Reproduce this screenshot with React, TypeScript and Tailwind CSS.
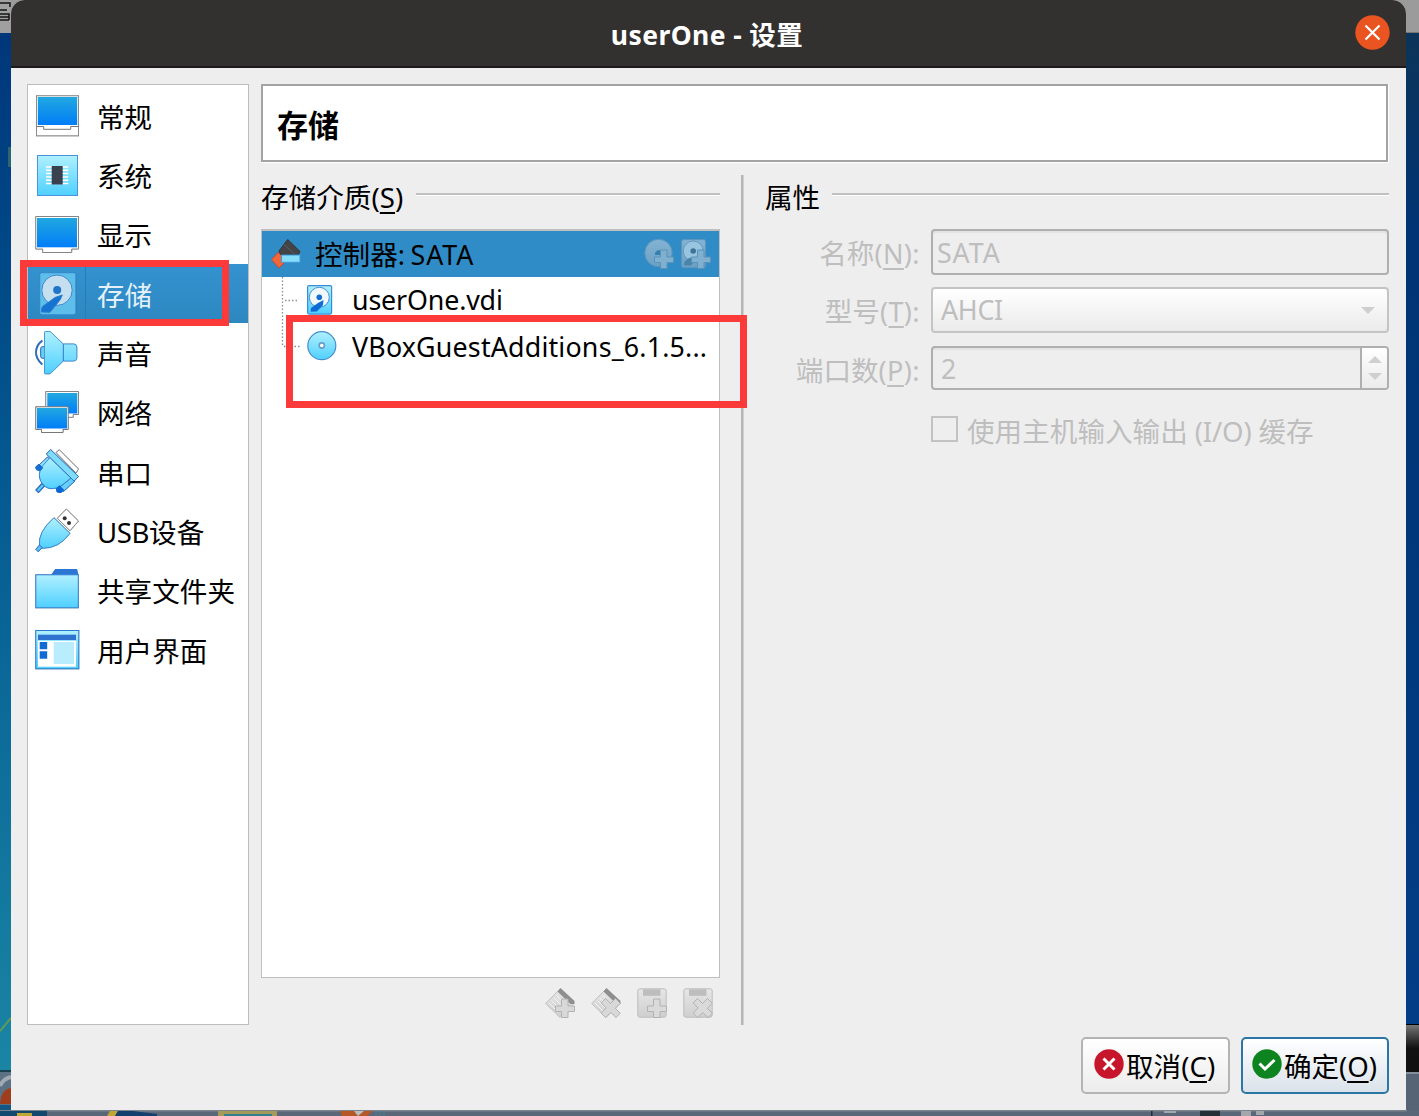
import React, { type ReactNode } from "react";

const INK = "#2b6fc4";

function Defs() {
  return (
    <svg width="0" height="0" className="absolute">
      <defs>
        <linearGradient id="screen" x1="0" y1="0" x2="0" y2="1">
          <stop offset="0" stopColor="#21a8e0" />
          <stop offset="1" stopColor="#007df8" />
        </linearGradient>
        <linearGradient id="ice" x1="0" y1="0" x2="0" y2="1">
          <stop offset="0" stopColor="#b0f0ff" />
          <stop offset="1" stopColor="#4fd0ff" />
        </linearGradient>
        <linearGradient id="grey" x1="0" y1="0" x2="0" y2="1">
          <stop offset="0" stopColor="#e6e6e6" />
          <stop offset="1" stopColor="#cfcfcf" />
        </linearGradient>
        <linearGradient id="steel" x1="0" y1="0" x2="0" y2="1">
          <stop offset="0" stopColor="#84b3d4" />
          <stop offset="1" stopColor="#6ba0c4" />
        </linearGradient>
      </defs>
    </svg>
  );
}

function Icon({ children }: { children: ReactNode }) {
  return (
    <svg width="45" height="46" viewBox="0 0 45 46" className="shrink-0 overflow-visible drop-shadow-[0.5px_0.8px_0.5px_rgba(0,0,0,0.35)]">
      {children}
    </svg>
  );
}

const GeneralIcon = () => (
  <Icon>
    <rect x="1.5" y="2.8" width="42" height="40" fill="#fff" stroke="#8b8b8b" />
    <rect x="2.8" y="4" width="39.4" height="28" fill="url(#screen)" />
    <path d="M1.5 33.5H8.7V36.3H35.7V33.5H43.5" fill="none" stroke="#777" />
  </Icon>
);

const SystemIcon = () => (
  <Icon>
    <rect x="2.5" y="3.5" width="40" height="40" fill="url(#ice)" stroke="#4a94de" />
    <path d="M11 15h22.3M11 18.3h22.3M11 21.6h22.3M11 24.9h22.3M11 28.2h22.3M11 31.5h22.3" stroke="#fff" strokeWidth="1.5" />
    <rect x="16.7" y="14" width="11" height="18.5" fill="#39414e" />
  </Icon>
);

const DisplayIcon = () => (
  <Icon>
    <path d="M.8 5.5h42.7v32.5h-6.8v3.5h-29v-3.5h-6.9z" fill="#fff" stroke="#858585" />
    <rect x="2" y="7" width="40" height="29.3" fill="url(#screen)" />
  </Icon>
);

const StorageIcon = () => (
  <Icon>
    <rect x="4.8" y="1.8" width="36" height="41.7" rx="2" fill="#5dbfe9" stroke="#3b91dc" />
    <circle cx="22" cy="19.2" r="15.2" fill="#c5def0" stroke="#3f89cf" />
    <circle cx="22.2" cy="19" r="4" fill="#1e75cc" />
    <path d="M27.300 24l-7.300 2.500-12.500 9q-1 1-1.200 5.500l8.700.3 10-12.300z" fill="#1674d0" stroke="#2a80cf" />
  </Icon>
);

const AudioIcon = () => (
  <Icon>
    <rect x="5.7" y="16.7" width="6" height="11.5" rx="2" fill="#68cff7" stroke={INK} />
    <path d="M10.500 1.500h3.500q1.500 0 2.500 1.200L28.300 14h10.500q3 0 3 3v11q0 3-3 3H28.300L16.500 42.500q-1 1.300-2.500 1.300h-3.500q-1 0-1-1V2.500q0-1 1-1z" fill="url(#ice)" stroke="#4797dd" />
    <path d="M28.300 14v17" stroke="#2d77cb" />
    <path d="M7.300 10.500Q1 15.500 1 22.300T7.300 34.500" fill="none" stroke={INK} strokeWidth="1.8" />
  </Icon>
);

const NetworkIcon = () => (
  <Icon>
    <path d="M10.800 2.500h32.700V25.500h-5.300v2.800h-16v-2.800H10.800z" fill="#fff" stroke="#858585" />
    <rect x="12.3" y="4" width="30" height="20.5" fill="url(#screen)" />
    <path d="M.8 17.800h32.400v22.700h-5.200v3H6.500v-3H.8z" fill="#fff" stroke="#777" />
    <rect x="2" y="19" width="30" height="20.5" fill="url(#screen)" />
  </Icon>
);

const SerialIcon = () => (
  <Icon>
    <path d="M24.300.7L43.500 20l-2.500 4L21 3.500z" fill="#fff" stroke="#858585" />
    <path d="M7 34.500L1 41l2.500 2.500L9.500 37z" fill="#5fcbfa" stroke={INK} strokeWidth="1.2" />
    <path d="M12.500 8L3.500 16.500l4 4L16 12z" fill="#91e2fd" stroke={INK} />
    <path d="M36 29L25 38l3.500 4.500L40 32z" fill="#65cffa" stroke={INK} />
    <path d="M15 8.500L6.500 18Q2.500 26 6 32.500T16 39.700Q22 40 26.500 36.500L36 29z" fill="url(#ice)" stroke="#3583d2" />
    <path d="M15.700.6L43.500 27.500l-4.400 4.600L11.300 5z" fill="#80dcfb" stroke={INK} />
    <path d="M4 15l3.700 3.800-2.500 3-3.500-1-1.200-2.600z" fill="#176ed1" stroke="#176ed1" strokeLinejoin="round" />
    <path d="M24.500 36.800l4.200 4.200-2.600 2.600-4-.6-.8-3.600z" fill="#0867d8" stroke="#0867d8" strokeLinejoin="round" />
  </Icon>
);

const UsbIcon = () => (
  <Icon>
    <path d="M31.300 1L43.500 13 35 22.700 22.300 10.300z" fill="#fff" stroke="#858585" />
    <circle cx="29.7" cy="10.3" r="2" fill="#333" />
    <circle cx="34" cy="15" r="2" fill="#333" />
    <path d="M19 9.700L35 25.300Q24 40.500 7.500 40.300L4.500 38Q2.500 24 19 9.700z" fill="url(#ice)" stroke="#3b88d4" />
    <path d="M4.500 37l2.600 2.500-3.800 4.300-2.500-2.500z" fill="#57c3f5" stroke={INK} />
  </Icon>
);

const FolderIcon = () => (
  <Icon>
    <path d="M16 8l4.300-6H42l1.500 6z" fill="#2b76d4" />
    <rect x=".8" y="7.8" width="42.5" height="33" fill="url(#ice)" stroke="#367fd0" />
  </Icon>
);

const InterfaceIcon = () => (
  <Icon>
    <rect x=".8" y="3.5" width="43" height="38.3" fill="url(#ice)" stroke="#287bcf" />
    <rect x="3" y="7.7" width="38" height="5.3" fill="#2c72ce" />
    <rect x="3" y="14" width="38" height="25.7" fill="#fff" />
    <path d="M4.700 15h7.500v7.300H4.700zM4.700 24.200h7.500v7.500H4.700z" fill="#0f6cd5" />
    <rect x="18.7" y="15" width="20.3" height="22" fill="#b9edfe" />
  </Icon>
);

const SECTIONS = [
  { label: "常规", icon: <GeneralIcon /> },
  { label: "系统", icon: <SystemIcon /> },
  { label: "显示", icon: <DisplayIcon /> },
  { label: "存储", icon: <StorageIcon />, active: true },
  { label: "声音", icon: <AudioIcon /> },
  { label: "网络", icon: <NetworkIcon /> },
  { label: "串口", icon: <SerialIcon /> },
  { label: "USB设备", icon: <UsbIcon /> },
  { label: "共享文件夹", icon: <FolderIcon /> },
  { label: "用户界面", icon: <InterfaceIcon /> },
];

function Sidebar() {
  return (
    <nav className="h-[941px] w-[222px] shrink-0 border border-[#bdbdbd] bg-white pt-px">
      {SECTIONS.map((s) => (
        <div
          key={s.label}
          className={
            s.active
              ? "flex h-[59.33px] bg-linear-to-b from-[#3492d0] to-[#2d88c0] pt-[6.6px] pl-[7px] text-[#e4f1fa]"
              : "flex h-[59.33px] pt-[6.6px] pl-[7px]"
          }
        >
          {s.icon}
          {s.active ? <span className="-mt-[6.6px] ml-[5px] h-[59px] w-px bg-[#2a7cb0]" /> : <span className="ml-[5px] w-px" />}
          <span className="ml-[11px] leading-[49.6px] whitespace-nowrap">
            {s.label.startsWith("USB") ? (
              <>
                <span className="tracking-[-0.4px]">USB</span>
                {s.label.slice(3)}
              </>
            ) : (
              s.label
            )}
          </span>
        </div>
      ))}
    </nav>
  );
}

function Rule() {
  return <span className="mt-[18px] h-[3px] grow border-t-2 border-b border-t-[#c0c0c0] border-b-white" />;
}

const Key = ({ children }: { children: string }) => (
  <span className="underline decoration-[1.5px] underline-offset-[4px]">{children}</span>
);

function TreeIconController() {
  return (
    <svg width="30" height="30" viewBox="0 0 30 30">
      <path d="M6.500 14L.5 20.500 8 29l6-6V14z" fill="#f2663a" stroke="#c84b2b" />
      <path d="M16.700.5L29 12.500l-1.500 3H9.500L8 12z" fill="#424446" stroke="#333" />
      <path d="M12.500 5l11 10" stroke="#606366" strokeWidth=".8" />
      <rect x="10.5" y="16" width="18.5" height="7.3" fill="#83ddfb" stroke="#3d97d9" />
    </svg>
  );
}

function TreeIconDisk() {
  return (
    <svg width="30" height="30" viewBox="0 0 30 30">
      <rect x=".6" y=".6" width="24" height="28.5" rx="1.5" fill="url(#ice)" stroke="#388bd5" strokeWidth="1.2" />
      <circle cx="12.3" cy="12.3" r="10" fill="#f1f9fe" stroke="#4590d1" />
      <circle cx="12.3" cy="12.3" r="2.8" fill="#146dd0" />
      <path d="M16.500 15l-5.500 3-7 5-.5 3.700 6.500-.2 6-6.500z" fill="#0e6cd4" />
    </svg>
  );
}

function TreeIconDisc() {
  return (
    <svg width="30" height="30" viewBox="0 0 30 30">
      <circle cx="14.8" cy="14.7" r="14" fill="url(#ice)" stroke="#458fcc" strokeWidth="1.2" />
      <circle cx="14.8" cy="14.5" r="2.6" fill="#fff" stroke="#6a9cc4" strokeWidth="1.6" />
    </svg>
  );
}

const PLUS = "M16.5 11h6.500v7h6.500v5.500h-6.500v6h-6.500v-6h-6v-5.500h6z";
const CROSS = "M14.500 10.500l5 5 5-5 4.800 4.800-5 5 5 5-4.300 4.200-5.300-5-5 5-4.500-4.500 5-5-5-5z";

function AddOptical() {
  return (
    <svg width="30" height="30" viewBox="0 0 30 30">
      <circle cx="14.5" cy="14" r="13.7" fill="url(#steel)" stroke="#5f94b9" />
      <path d="M11 16v-2q1-3 5.500-3v5z" fill="#3580b0" />
      <path d={PLUS} fill="#7fb0d0" stroke="#5d92b8" />
    </svg>
  );
}

function AddDisk() {
  return (
    <svg width="30" height="30" viewBox="0 0 30 30">
      <rect x=".6" y=".6" width="24" height="28" rx="2" fill="url(#steel)" stroke="#5f94b9" />
      <circle cx="12.2" cy="12" r="10" fill="#98c4e0" stroke="#6699bc" />
      <circle cx="12.2" cy="12" r="2.8" fill="#3d7498" />
      <path d="M13 18l-5 1-4.500 3.700-.5 3.500 7 .300 4-5z" fill="#4883a8" />
      <path d={PLUS} fill="#80b0d0" stroke="#5d92b8" />
    </svg>
  );
}

function ControllerTool({ shape }: { shape: string }) {
  return (
    <svg width="30" height="30" viewBox="0 0 30 30">
      <path d="M15 1L.7 15.500 15 29.500l14-14z" fill="url(#grey)" stroke="#c0c0c0" />
      <path d="M4 15l8 8M6.500 12.500l8 8M9 10l8 8M11.500 7.500l8 8" stroke="#f2f2f2" strokeWidth="1" />
      <path d="M15.500 0l14 13v3h-4L12.500 3.500z" fill="#8e8e8e" />
      <path d={shape} fill="#d8d8d8" stroke="#b2b2b2" />
    </svg>
  );
}

function AttachmentTool({ shape }: { shape: string }) {
  return (
    <svg width="30" height="30" viewBox="0 0 30 30">
      <rect x=".8" y=".8" width="28.4" height="28.4" rx="2" fill="url(#grey)" stroke="#bdbdbd" />
      <rect x="6" y="1.3" width="17.5" height="6.5" fill="#bdbdbd" />
      <path d={shape} fill="#dadada" stroke="#b2b2b2" />
    </svg>
  );
}

function StorageTree() {
  return (
    <section className="w-[459px] shrink-0">
      <div className="flex h-[54px]">
        <h2 className="mr-[13px] -mt-px leading-[46px] whitespace-nowrap">
          存储介质<span className="tracking-[0.1px]">(<Key>S</Key>)</span>
        </h2>
        <Rule />
      </div>
      <div className="relative h-[749px] border border-t-2 border-[#bfbfbf] bg-white">
        <div className="flex h-[46px] items-center bg-[#308cc6] pr-[8px] pl-[9px]">
          <TreeIconController />
          <span className="ml-[14px] grow leading-[44px]">
            控制器<span className="text-[26.8px] tracking-[-0.72px]">: </span>
            <span className="text-[26.8px] tracking-[0.9px]">SATA</span>
          </span>
          <AddOptical />
          <span className="w-[7px]" />
          <AddDisk />
        </div>
        <div className="flex h-[46px] items-center pl-[45px] text-[26.8px]">
          <TreeIconDisk />
          <span className="ml-[15px] leading-[46px] tracking-[-0.15px]">userOne.vdi</span>
        </div>
        <div className="flex h-[46px] items-center pl-[45px] text-[26.8px]">
          <TreeIconDisc />
          <span className="mt-[2px] ml-[15px] leading-[46px] tracking-[0.19px] whitespace-nowrap">VBoxGuestAdditions_6.1.5...</span>
        </div>
        <svg width="24" height="74" className="absolute top-[46px] left-[19px]">
          <path d="M1.500 0V70M4 23.500h13M3 69.500h16" fill="none" stroke="#8c8c8c" strokeDasharray="1.500 2" strokeWidth="1.3" />
        </svg>
        <div className="absolute top-[84px] left-[24px] h-[93px] w-[461px] border-[7px] border-[#fc3a39]" />
      </div>
      <div className="flex justify-end gap-[16px] pt-[10px] pr-[7px]">
        <ControllerTool shape={PLUS} />
        <ControllerTool shape={CROSS} />
        <AttachmentTool shape={PLUS} />
        <AttachmentTool shape={CROSS} />
      </div>
    </section>
  );
}

function Row({ label, mnemonic, height, children }: { label: string; mnemonic: string; height: string; children: ReactNode }) {
  return (
    <div className={height}>
      <label className="w-[155px] text-right leading-[48px] whitespace-nowrap">
        {label}
        <span className="text-[27px] tracking-[0.4px]">
          (<Key>{mnemonic}</Key>):
        </span>
      </label>
      <div className="ml-[11px] flex grow">{children}</div>
    </div>
  );
}

function Attributes() {
  return (
    <section className="ml-[21px] w-[624px]">
      <div className="flex h-[54px]">
        <h2 className="mr-[12px] -mt-px leading-[46px]">属性</h2>
        <Rule />
      </div>
      <div className="text-[#bebebe]">
        <Row label="名称" mnemonic="N" height="flex h-[58px]">
          <div className="h-[46px] grow rounded-[4px] border-2 border-[#afafaf] pl-[4px] text-[26.8px] leading-[43px] tracking-[0.9px] shadow-[inset_0_2px_1px_#e2e2e2]">SATA</div>
        </Row>
        <Row label="型号" mnemonic="T" height="flex h-[59px]">
          <div className="flex h-[46px] grow items-center justify-between rounded-[4px] border-2 border-[#c4c4c4] bg-linear-to-b from-white to-[#ebebeb] pr-[12px] pl-[8px] text-[26.8px] tracking-[-0.3px]">
            <span className="-mt-px leading-[42px]">AHCI</span>
            <svg width="14" height="7"><path d="M0 0h14L7 7z" fill="#cfcfcf" /></svg>
          </div>
        </Row>
        <Row label="端口数" mnemonic="P" height="flex h-[71px]">
          <div className="flex h-[44px] grow overflow-hidden rounded-[4px] border-2 border-[#afafaf] pl-[8px] text-[26.8px] shadow-[inset_0_2px_1px_#e2e2e2]">
            <span className="grow leading-[42px]">2</span>
            <span className="flex w-[27px] flex-col items-center gap-[10px] border-l-2 border-[#afafaf] bg-linear-to-b from-white to-[#ebebeb] pt-[8px]">
              <svg width="14" height="7"><path d="M0 7h14L7 0z" fill="#cfcfcf" /></svg>
              <svg width="14" height="7"><path d="M0 0h14L7 7z" fill="#cfcfcf" /></svg>
            </span>
          </div>
        </Row>
        <div className="flex pl-[166px]">
          <span className="-mt-px h-[26px] w-[27px] border-2 border-[#c2c2c2]" />
          <span className="-mt-[9px] ml-[9px] leading-[46px] whitespace-nowrap">
            使用主机输入输出<span className="tracking-[-0.2px]"> (I/O) </span>缓存
          </span>
        </div>
      </div>
    </section>
  );
}

function Footer() {
  return (
    <div className="flex justify-end gap-[11px] pt-[12px] pr-[17px]">
      <button className="flex h-[57px] w-[149px] items-center rounded-[5px] border-2 border-[#b4b4b4] bg-linear-to-b from-white to-[#ececec] pl-[11px]">
        <svg width="30" height="30" viewBox="0 0 30 30" className="-mt-[3px] shrink-0">
          <circle cx="15" cy="15" r="14.7" fill="#c7162b" />
          <path d="M9.500 9.500l11 11M20.500 9.500l-11 11" stroke="#fff" strokeWidth="3" />
        </svg>
        <span className="ml-[2px] leading-[54px] whitespace-nowrap">取消(<Key>C</Key>)</span>
      </button>
      <button className="flex h-[57px] w-[148px] items-center rounded-[5px] border-2 border-[#2b76a4] bg-linear-to-b from-white to-[#dae2ea] pl-[9px]">
        <svg width="30" height="30" viewBox="0 0 30 30" className="-mt-[3px] shrink-0">
          <circle cx="15" cy="15" r="14.7" fill="#0e8420" />
          <path d="M7.500 14.500l5.500 5.500 9.500-9" fill="none" stroke="#fff" strokeWidth="3" />
        </svg>
        <span className="ml-[2px] leading-[54px] tracking-[-0.1px] whitespace-nowrap">确定(<Key>O</Key>)</span>
      </button>
    </div>
  );
}

function LeftBackdrop() {
  return (
    <div className="h-[1110px] overflow-hidden bg-linear-to-b from-[#003479] via-[#075f94] to-[#1c88a5]">
      <div className="h-[33px] bg-[#a0a0a0]">
        <svg width="11" height="33"><path d="M0 3h10v4M0 10h7M0 14h9v6M0 17h9M0 20h9" fill="none" stroke="#151515" strokeWidth="1.5" /></svg>
      </div>
      <svg width="11" height="1077" viewBox="0 33 11 1077">
        <rect x="8" y="147" width="3" height="20" fill="#2b6672" />
        <path d="M0 1031L11 1018" stroke="#5f9a57" strokeWidth="2" />
        <rect y="1071" width="11" height="39" fill="#5d7184" />
        <rect y="1070" width="11" height="2" fill="#18404f" />
        <path d="M0 1086q3-7 11-9" stroke="#a0aab2" strokeWidth="4" fill="none" />
        <path d="M0 1104q1-15 11-16v16z" fill="#9f3e1c" />
        <rect y="1105" width="11" height="5" fill="#145783" />
      </svg>
    </div>
  );
}

function RightBackdrop() {
  return (
    <div className="h-[1110px]">
      <div className="h-[33px] border-b border-[#777] bg-[#9b9b9b]" />
      <div className="h-[991px] bg-linear-to-b from-[#0d3459] via-[#003474] via-20% to-[#023d85]" />
      <div className="h-[48px] border-t border-black bg-linear-to-b from-[#777] via-[#111] via-50% to-[#101010]" />
      <div className="h-[38px] border-t-2 border-[#848e9b] bg-[#566475]" />
    </div>
  );
}

function BottomBackdrop() {
  return (
    <svg width="1419" height="6" className="col-span-3">
      <rect width="1419" height="6" fill="#596779" />
      <rect width="1407" height="1.5" fill="#7b838d" />
      <path d="M0 1h47v5H0z" fill="#14496f" />
      <path d="M17 3h15v3H17zM110 1h8l-3 5h-8z" fill="#c2a632" />
      <path d="M118 1h15l24 3v2h-42z" fill="#123f6e" />
      <path d="M218 1h59v5h-59z" fill="#a49a59" />
      <path d="M224 4h48v2h-48z" fill="#337f8f" />
      <path d="M340 1h14l4 5h-16zM364 1h9l-6 5h-9z" fill="#b55727" />
      <path d="M354 1h10l-6 5z" fill="#bcbcbc" />
      <path d="M376 1v5M380 1v5M384 1v5" stroke="#3f8399" />
      <path d="M1151 1h1.500v5h-1.500zM1200 1h20v5h-20z" fill="#252d37" />
      <path d="M1164 1h12v2h-12zM1241 1h10v5h-10zM1256 1h8v4h-8z" fill="#a3a7ab" />
    </svg>
  );
}

export default function App() {
  return (
    <div className="grid h-[1116px] w-[1419px] grid-cols-[11px_1395px_13px] grid-rows-[1110px_6px] overflow-hidden bg-[#9b9b9b] font-['Noto_Sans','Noto_Sans_CJK_SC',sans-serif] text-[27.6px] text-black">
      <Defs />
      <LeftBackdrop />
      <main className="relative flex h-[1110px] flex-col overflow-hidden rounded-t-[14px] bg-[#eeeeee]">
        <header className="relative flex h-[68px] shrink-0 items-center justify-center border-b-2 border-[#1c1a1a] bg-[#333030] pt-[5px] pr-[3px] text-[26.5px] font-bold text-white">
          <h1 className="tracking-[0.4px] whitespace-nowrap">userOne - 设置</h1>
          <button aria-label="关闭" className="absolute top-[15px] right-[16px]">
            <svg width="35" height="35" viewBox="0 0 35 35">
              <circle cx="17.5" cy="17.5" r="17.2" fill="#e95420" />
              <path d="M10.500 10.500l14 14M24.500 10.500l-14 14" stroke="#fff" strokeWidth="2.2" />
            </svg>
          </button>
        </header>
        <div className="flex pt-[16px] pl-[16px]">
          <Sidebar />
          <div className="ml-[12px] w-[1128px]">
            <div className="h-[79px] border-r border-b border-white">
              <div className="h-full border-2 border-[#a3a3a3] bg-white pl-[14px] text-[31px] leading-[78px] font-bold">存储</div>
            </div>
            <div className="flex h-[862px] pt-[12px]">
              <StorageTree />
              <div className="ml-[21px] w-[3px] border-r border-l-2 border-r-[#d0d0d0] border-l-[#b5b5b5]" />
              <Attributes />
            </div>
          </div>
        </div>
        <Footer />
        <div className="absolute top-[260px] left-[9px] h-[66px] w-[209px] border-[7px] border-[#fc3a39]" />
      </main>
      <RightBackdrop />
      <BottomBackdrop />
    </div>
  );
}
